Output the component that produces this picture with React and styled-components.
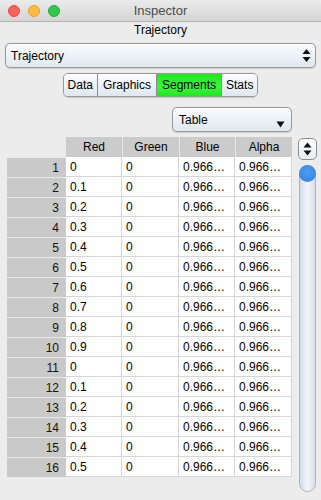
import React from 'react'
import styled, { createGlobalStyle, css } from 'styled-components'

const GlobalStyle = createGlobalStyle`
  html, body {
    margin: 0;
    padding: 0;
    background: #ececec;
  }
  body {
    font-family: "Liberation Sans", Arial, sans-serif;
    font-size: 12px;
    color: #000;
  }
`

const Window = styled.div`
  width: 321px;
  height: 500px;
  box-sizing: border-box;
  background: #ececec;
  display: flex;
  flex-direction: column;
  overflow: hidden;
  border-radius: 5px 5px 0 0;
`

const TitleBar = styled.div`
  height: 21px;
  flex: none;
  position: relative;
  display: flex;
  align-items: center;
  justify-content: center;
  background: linear-gradient(#ebebeb, #d5d5d5);
  border-bottom: 1px solid #b3b3b3;
  border-radius: 5px 5px 0 0;
`

const Lights = styled.div`
  position: absolute;
  left: 8px;
  top: 5px;
  display: flex;
  gap: 8px;
`

const Light = styled.span`
  width: 12px;
  height: 12px;
  box-sizing: border-box;
  border-radius: 50%;
  background: ${({ $fill }) => $fill};
  border: 1px solid ${({ $edge }) => $edge};
`

const WindowTitle = styled.div`
  font-size: 13px;
  color: #4c4c4c;
`

const Caption = styled.div`
  height: 18px;
  line-height: 17px;
  text-align: center;
  font-size: 12px;
`

const PopUp = styled.div`
  box-sizing: border-box;
  position: relative;
  height: 25px;
  border: 1px solid #999;
  border-radius: 5px;
  background: linear-gradient(#fafcfe, #dfe8f1);
  box-shadow: 0 0.5px 1px rgba(0, 0, 0, 0.15);
  display: flex;
  align-items: center;
  padding-left: 5px;
  font-size: 12px;
`

const SourcePopUp = styled(PopUp)`
  margin: 3px 5px 0 5px;
`

const Arrows = styled.svg`
  position: absolute;
  right: 4px;
  top: 4px;
`

const TabRow = styled.div`
  display: flex;
  justify-content: center;
  margin-top: 5px;
`

const Segmented = styled.div`
  display: flex;
  height: 24px;
  box-sizing: border-box;
  border: 1px solid #999;
  border-radius: 5px;
  overflow: hidden;
  box-shadow: 0 0.5px 1px rgba(0, 0, 0, 0.15);
`

const Segment = styled.div`
  display: flex;
  align-items: center;
  padding: 0 ${({ $pad }) => $pad}px;
  font-size: 12px;
  background: linear-gradient(#fbfcfe, #dfe7f0);
  & + & {
    border-left: 1px solid #8d8d8d;
  }
  ${({ $active }) =>
    $active &&
    css`
      background: linear-gradient(#1ee81e, #3cf53c 60%, #22e522);
    `}
`

const ViewRow = styled.div`
  display: flex;
  justify-content: flex-end;
  padding-right: 29px;
  margin-top: 10px;
`

const ViewPopUp = styled(PopUp)`
  width: 120px;
  padding-left: 6px;
`

const Body = styled.div`
  display: flex;
  margin-top: 5px;
  padding-left: 7px;
  gap: 6px;
`

const Table = styled.div`
  display: grid;
  grid-template-columns: 59px 56px 57px 56px 57px;
  grid-auto-rows: 20px;
  align-self: flex-start;
`

const Corner = styled.div``

const Head = styled.div`
  background: #cbcbcb;
  display: flex;
  align-items: center;
  justify-content: center;
  font-size: 12px;
  border-left: 1px solid #e6e6e6;
  &:nth-child(2) {
    border-left: none;
  }
`

const RowNum = styled.div`
  background: #c9c9c9;
  border-top: 1px solid #e9e9e9;
  display: flex;
  align-items: center;
  justify-content: flex-end;
  padding-right: 7px;
  color: #1a1208;
`

const Cell = styled.div`
  background: #fff;
  border-right: 1px solid #d6d6d6;
  border-bottom: 1px solid #d6d6d6;
  display: flex;
  align-items: center;
  padding-left: 4px;
  overflow: hidden;
  white-space: nowrap;
`

const Side = styled.div`
  width: 19px;
  display: flex;
  flex-direction: column;
  align-items: center;
  padding-top: 1px;
`

const Stepper = styled.div`
  width: 19px;
  height: 22px;
  box-sizing: border-box;
  border: 1px solid #8e8e8e;
  border-radius: 5px;
  background: linear-gradient(#fcfcfc, #e9eef3);
  display: flex;
  align-items: center;
  justify-content: center;
`

const Track = styled.div`
  margin-top: 5px;
  width: 17px;
  height: 327px;
  box-sizing: border-box;
  border: 1px solid #aab4c0;
  border-radius: 9px;
  background: linear-gradient(90deg, #d2dce8, #f2f5f9 50%, #d7e0ea);
  display: flex;
  justify-content: center;
  padding-top: 0;
`

const Knob = styled.div`
  width: 17px;
  height: 17px;
  margin-top: -1px;
  border-radius: 50%;
  background: radial-gradient(circle at 50% 40%, #4e9cf0, #2f7fe3);
  flex: none;
`

const reds = ['0', '0.1', '0.2', '0.3', '0.4', '0.5', '0.6', '0.7', '0.8', '0.9', '0', '0.1', '0.2', '0.3', '0.4', '0.5']

const UpDown = ({ w = 9, h = 14 }) => (
  <svg width={w} height={h} viewBox="0 0 9 14">
    <path d="M4.5 0.5 L8.5 5.5 L0.5 5.5 Z" fill="#111" />
    <path d="M4.5 13.5 L8.5 8.5 L0.5 8.5 Z" fill="#111" />
  </svg>
)

const App = () => (
  <>
    <GlobalStyle />
    <Window>
      <TitleBar>
        <Lights>
          <Light $fill="#fc605c" $edge="#de4a45" />
          <Light $fill="#fdbc40" $edge="#dea236" />
          <Light $fill="#34c84a" $edge="#28a93a" />
        </Lights>
        <WindowTitle>Inspector</WindowTitle>
      </TitleBar>
      <Caption>Trajectory</Caption>

      <SourcePopUp>
        Trajectory
        <Arrows width="9" height="15" viewBox="0 0 9 14">
          <path d="M4.5 0.5 L8.5 5.5 L0.5 5.5 Z" fill="#111" />
          <path d="M4.5 13.5 L8.5 8.5 L0.5 8.5 Z" fill="#111" />
        </Arrows>
      </SourcePopUp>

      <TabRow>
        <Segmented>
          <Segment $pad={4}>Data</Segment>
          <Segment $pad={5}>Graphics</Segment>
          <Segment $pad={5} $active>Segments</Segment>
          <Segment $pad={4}>Stats</Segment>
        </Segmented>
      </TabRow>

      <ViewRow>
        <ViewPopUp>
          Table
          <Arrows width="9" height="7" viewBox="0 0 9 7" style={{ top: 13, right: 6 }}>
            <path d="M0.5 0.5 L8.5 0.5 L4.5 6.5 Z" fill="#111" />
          </Arrows>
        </ViewPopUp>
      </ViewRow>

      <Body>
        <Table>
          <Corner />
          <Head>Red</Head>
          <Head>Green</Head>
          <Head>Blue</Head>
          <Head>Alpha</Head>
          {reds.map((r, i) => (
            <React.Fragment key={i}>
              <RowNum>{i + 1}</RowNum>
              <Cell>{r}</Cell>
              <Cell>0</Cell>
              <Cell>0.966…</Cell>
              <Cell>0.966…</Cell>
            </React.Fragment>
          ))}
        </Table>
        <Side>
          <Stepper>
            <UpDown />
          </Stepper>
          <Track>
            <Knob />
          </Track>
        </Side>
      </Body>
    </Window>
  </>
)

export default App
